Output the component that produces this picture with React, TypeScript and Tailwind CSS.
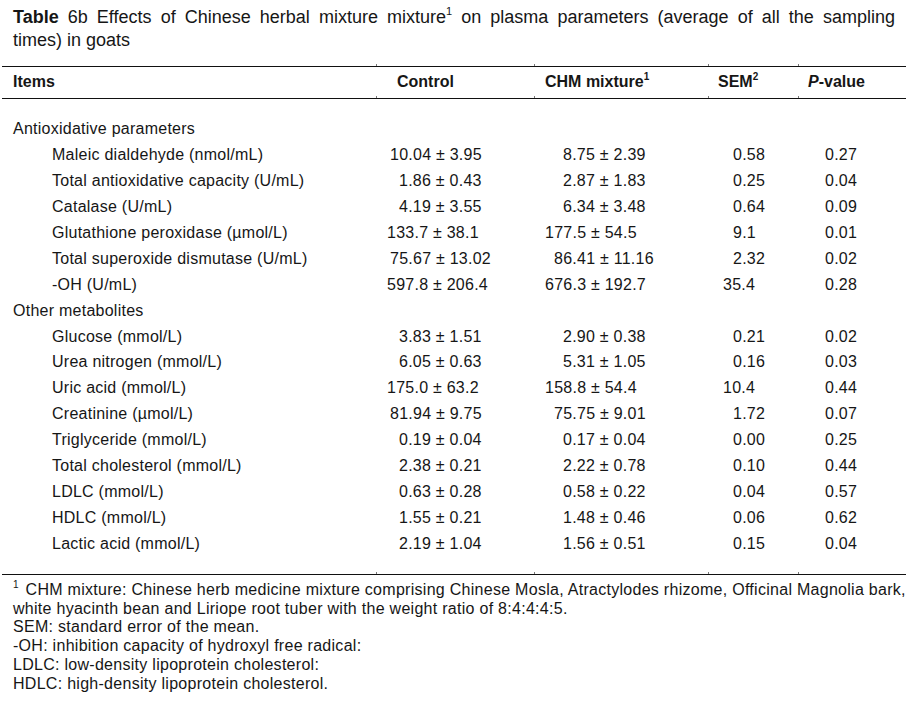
import React from "react";

type Row =
  | { cat: string }
  | { name: string; c: string; m: string; s: string; p: string };

const rows: Row[] = [
  { cat: "Antioxidative parameters" },
  { name: "Maleic dialdehyde (nmol/mL)", c: "10.04 ± 3.95", m: "8.75 ± 2.39", s: "0.58", p: "0.27" },
  { name: "Total antioxidative capacity (U/mL)", c: "1.86 ± 0.43", m: "2.87 ± 1.83", s: "0.25", p: "0.04" },
  { name: "Catalase (U/mL)", c: "4.19 ± 3.55", m: "6.34 ± 3.48", s: "0.64", p: "0.09" },
  { name: "Glutathione peroxidase (µmol/L)", c: "133.7 ± 38.1", m: "177.5 ± 54.5", s: "9.1", p: "0.01" },
  { name: "Total superoxide dismutase (U/mL)", c: "75.67 ± 13.02", m: "86.41 ± 11.16", s: "2.32", p: "0.02" },
  { name: "-OH (U/mL)", c: "597.8 ± 206.4", m: "676.3 ± 192.7", s: "35.4", p: "0.28" },
  { cat: "Other metabolites" },
  { name: "Glucose (mmol/L)", c: "3.83 ± 1.51", m: "2.90 ± 0.38", s: "0.21", p: "0.02" },
  { name: "Urea nitrogen (mmol/L)", c: "6.05 ± 0.63", m: "5.31 ± 1.05", s: "0.16", p: "0.03" },
  { name: "Uric acid (mmol/L)", c: "175.0 ± 63.2", m: "158.8 ± 54.4", s: "10.4", p: "0.44" },
  { name: "Creatinine (µmol/L)", c: "81.94 ± 9.75", m: "75.75 ± 9.01", s: "1.72", p: "0.07" },
  { name: "Triglyceride (mmol/L)", c: "0.19 ± 0.04", m: "0.17 ± 0.04", s: "0.00", p: "0.25" },
  { name: "Total cholesterol (mmol/L)", c: "2.38 ± 0.21", m: "2.22 ± 0.78", s: "0.10", p: "0.44" },
  { name: "LDLC (mmol/L)", c: "0.63 ± 0.28", m: "0.58 ± 0.22", s: "0.04", p: "0.57" },
  { name: "HDLC (mmol/L)", c: "1.55 ± 0.21", m: "1.48 ± 0.46", s: "0.06", p: "0.62" },
  { name: "Lactic acid (mmol/L)", c: "2.19 ± 1.04", m: "1.56 ± 0.51", s: "0.15", p: "0.04" },
];

const intDigits = (v: string) => v.split(".")[0].trim().length;

const controlPad: Record<number, string> = { 1: "pl-[23px]", 2: "pl-[14px]", 3: "pl-[11px]" };
const chmPad: Record<number, string> = { 1: "pl-[29px]", 2: "pl-[20px]", 3: "pl-[11px]" };
const semPad: Record<number, string> = { 1: "pl-[25px]", 2: "pl-[15px]", 3: "pl-[15px]" };

const COLS = "grid grid-cols-[374px_158px_174px_90px_108px]";

function Rule() {
  return (
    <div>
      <div className={COLS}>
        <div className="h-[2px]" />
        <div className="h-[2px] border-l border-[#777]" />
        <div className="h-[2px] border-l border-[#777]" />
        <div className="h-[2px] border-l border-[#777]" />
        <div className="h-[2px] border-l border-[#777]" />
      </div>
      <div className="h-px bg-[#111]" />
    </div>
  );
}

function Sup({ children }: { children: React.ReactNode }) {
  return <span className="relative top-[-7px] text-[10px] leading-none">{children}</span>;
}

export default function App() {
  return (
    <div className="w-[910px] h-[703px] overflow-hidden bg-white text-[#161616] font-['Liberation_Sans',Arial,Helvetica,sans-serif]">
      <div className="pl-[13px] pr-[15px] pt-[6px] text-[18px] leading-[22.5px]">
        <div className="text-justify [text-align-last:justify]">
          <b>Table</b> 6b Effects of Chinese herbal mixture mixture
          <span className="relative top-[-8px] text-[11px] leading-none">1</span> on plasma parameters (average of all the sampling
        </div>
        <div>times) in goats</div>
      </div>

      <div className="ml-[2px] w-[904px] mt-[13px]">
        <Rule />
        <div className={`${COLS} h-[29px] leading-[30px] text-[16px] font-bold`}>
          <div className="pl-[11px]">Items</div>
          <div className="pl-[21px]">Control</div>
          <div className="pl-[11px]">
            CHM mixture<Sup>1</Sup>
          </div>
          <div className="pl-[10px]">
            SEM<Sup>2</Sup>
          </div>
          <div className="pl-[10px]">
            <i>P</i>-value
          </div>
        </div>
        <Rule />

        <div className="mt-[17px] text-[16px] leading-[25.94px] tracking-[0.25px] whitespace-nowrap">
          {rows.map((r, i) =>
            "cat" in r ? (
              <div key={i} className="pl-[11px]">
                {r.cat}
              </div>
            ) : (
              <div key={i} className={COLS}>
                <div className="pl-[50px]">{r.name}</div>
                <div className={controlPad[intDigits(r.c)]}>{r.c}</div>
                <div className={chmPad[intDigits(r.m)]}>{r.m}</div>
                <div className={semPad[intDigits(r.s)]}>{r.s}</div>
                <div className="pl-[27px]">{r.p}</div>
              </div>
            )
          )}
        </div>

        <div className="mt-[15px]">
          <Rule />
        </div>
      </div>

      <div className="mt-[6px] pl-[13px] text-[16px] leading-[18.75px] tracking-[0.28px] whitespace-nowrap">
        <div>
          <Sup>1</Sup>
          <span className="pl-[2px]"> CHM mixture: Chinese herb medicine mixture comprising Chinese Mosla, Atractylodes rhizome, Officinal Magnolia bark,</span>
        </div>
        <div>white hyacinth bean and Liriope root tuber with the weight ratio of 8:4:4:4:5.</div>
        <div>SEM: standard error of the mean.</div>
        <div>-OH: inhibition capacity of hydroxyl free radical:</div>
        <div>LDLC: low-density lipoprotein cholesterol:</div>
        <div>HDLC: high-density lipoprotein cholesterol.</div>
      </div>
    </div>
  );
}
